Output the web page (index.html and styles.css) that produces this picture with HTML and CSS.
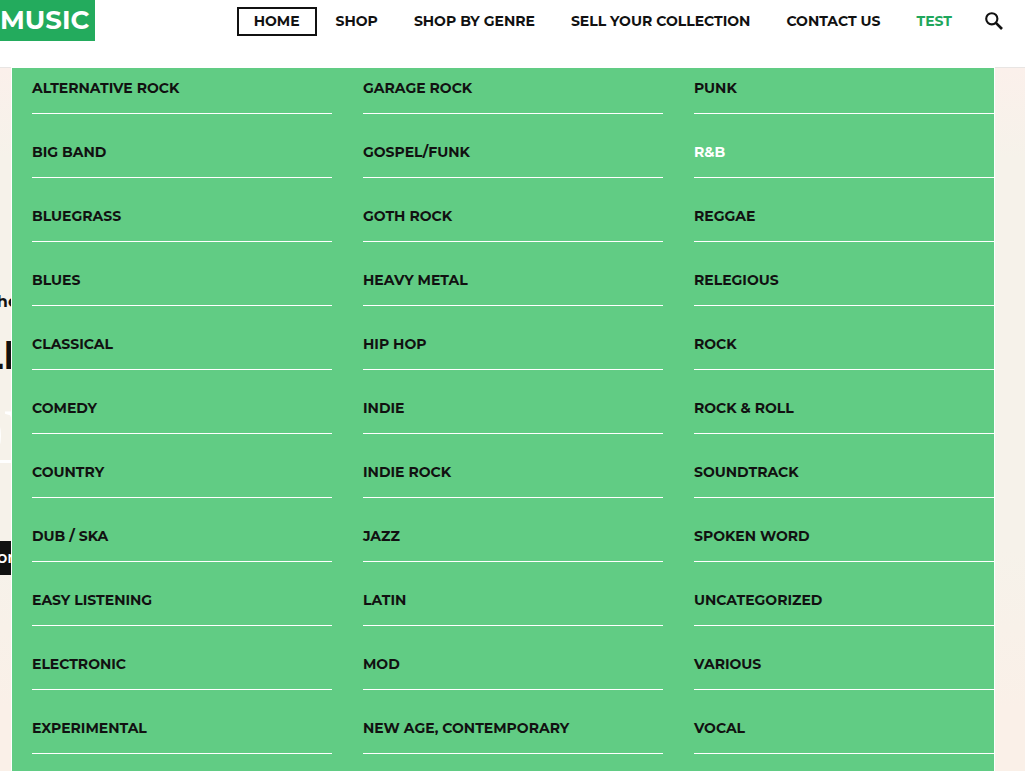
FILE: index.html
```html
<!DOCTYPE html>
<html lang="en">
<head>
<meta charset="utf-8">
<title>Music</title>
<link rel="stylesheet" href="styles.css">
</head>
<body>
<header class="header">
  <a class="logo" href="#">MUSIC</a>
  <nav class="nav">
    <a class="nav-link current" href="#">HOME</a>
    <a class="nav-link" href="#">SHOP</a>
    <a class="nav-link" href="#">SHOP BY GENRE</a>
    <a class="nav-link" href="#">SELL YOUR COLLECTION</a>
    <a class="nav-link" href="#">CONTACT US</a>
    <a class="nav-link accent" href="#">TEST</a>
  </nav>
  <button class="search" type="button" aria-label="Search">
    <svg width="18" height="18" viewBox="0 0 18 18" fill="none" stroke="currentColor"><circle cx="6.8" cy="6.8" r="5.6" stroke-width="2.1"/><path d="M10.9 10.9L17 17" stroke-width="2.7"/></svg>
  </button>
  <div class="mega">
    <ul class="genres">
      <li><a href="#">ALTERNATIVE ROCK</a></li>
      <li><a href="#">BIG BAND</a></li>
      <li><a href="#">BLUEGRASS</a></li>
      <li><a href="#">BLUES</a></li>
      <li><a href="#">CLASSICAL</a></li>
      <li><a href="#">COMEDY</a></li>
      <li><a href="#">COUNTRY</a></li>
      <li><a href="#">DUB / SKA</a></li>
      <li><a href="#">EASY LISTENING</a></li>
      <li><a href="#">ELECTRONIC</a></li>
      <li><a href="#">EXPERIMENTAL</a></li>
    </ul>
    <ul class="genres">
      <li><a href="#">GARAGE ROCK</a></li>
      <li><a href="#">GOSPEL/FUNK</a></li>
      <li><a href="#">GOTH ROCK</a></li>
      <li><a href="#">HEAVY METAL</a></li>
      <li><a href="#">HIP HOP</a></li>
      <li><a href="#">INDIE</a></li>
      <li><a href="#">INDIE ROCK</a></li>
      <li><a href="#">JAZZ</a></li>
      <li><a href="#">LATIN</a></li>
      <li><a href="#">MOD</a></li>
      <li><a href="#">NEW AGE, CONTEMPORARY</a></li>
    </ul>
    <ul class="genres">
      <li><a href="#">PUNK</a></li>
      <li><a class="active" href="#">R&amp;B</a></li>
      <li><a href="#">REGGAE</a></li>
      <li><a href="#">RELEGIOUS</a></li>
      <li><a href="#">ROCK</a></li>
      <li><a href="#">ROCK &amp; ROLL</a></li>
      <li><a href="#">SOUNDTRACK</a></li>
      <li><a href="#">SPOKEN WORD</a></li>
      <li><a href="#">UNCATEGORIZED</a></li>
      <li><a href="#">VARIOUS</a></li>
      <li><a href="#">VOCAL</a></li>
    </ul>
  </div>
</header>
<main class="hero">
  <p class="intro">he</p>
  <h1 class="title">LI</h1>
  <p class="word">ov</p>
  <a class="more" href="#">or</a>
</main>
</body>
</html>
```
FILE: styles.css
```css
* { box-sizing: border-box; }

body {
  margin: 0;
  height: 100vh;
  display: flex;
  flex-direction: column;
  overflow: hidden;
  color: #111;
  font-family: Montserrat, Inter, "Open Sans", sans-serif;
  font-size: 14px;
  font-weight: 700;
  line-height: 20px;
}

a { color: inherit; text-decoration: none; }
p, h1, ul { margin: 0; padding: 0; }

.header {
  position: relative;
  z-index: 1;
  display: flex;
  align-items: flex-start;
  flex: none;
  height: 68px;
  padding-right: 22px;
  background: #fff;
  border-bottom: 1px solid #e8e5e3;
}

.logo {
  width: 95px;
  height: 41px;
  background: #23ab5d;
  color: #fff;
  font-size: 26px;
  line-height: 41px;
}

.nav {
  display: flex;
  gap: 2px;
  margin-top: 7px;
  margin-left: auto;
}

.nav-link {
  padding: 2px 17px;
  line-height: 25px;
  white-space: nowrap;
}

.current {
  padding: 0 15px;
  border: 2px solid #111;
}

.accent { color: #1fa75c; }

.search {
  display: flex;
  margin: 12px 0 0 16px;
  padding: 0;
  border: 0;
  background: none;
  color: #111;
}

.mega {
  position: absolute;
  top: 67px;
  left: 11px;
  right: 30px;
  height: calc(100vh - 67px);
  padding: 0 0 0 20px;
  display: grid;
  grid-template-columns: repeat(3, 1fr);
  gap: 31px;
  overflow: hidden;
  background: #61cc84;
  border: 1px solid #fff;
  border-bottom: 0;
}

.genres {
  display: flex;
  flex-direction: column;
  gap: 18px;
  list-style: none;
}

.genres a {
  display: block;
  padding: 10px 0 15px;
  border-bottom: 1px solid #fff;
}

.genres .active { color: #fff; }

.hero {
  flex: 1;
  overflow: hidden;
  padding-top: 224px;
  background: linear-gradient(#fbf0eb 0, #f6f2ea 90px, #f6f2ea 480px, #faf0e8 640px);
}

.intro {
  width: 18px;
  display: flex;
  justify-content: flex-end;
  font-size: 16px;
}

.title {
  width: 16px;
  margin-top: 18px;
  display: flex;
  justify-content: flex-end;
  font-size: 40px;
  line-height: 50px;
}

.word {
  width: 59px;
  display: flex;
  justify-content: flex-end;
  height: 83px;
  border-bottom: 3px solid #fff;
  color: #fff;
  font-family: "Liberation Serif", serif;
  font-size: 108px;
  font-weight: 400;
  line-height: 90px;
}

.more {
  display: flex;
  justify-content: flex-end;
  width: 14px;
  margin-top: 78px;
  background: #111;
  color: #fff;
  font-size: 16px;
  font-weight: 600;
  line-height: 34px;
}
```
